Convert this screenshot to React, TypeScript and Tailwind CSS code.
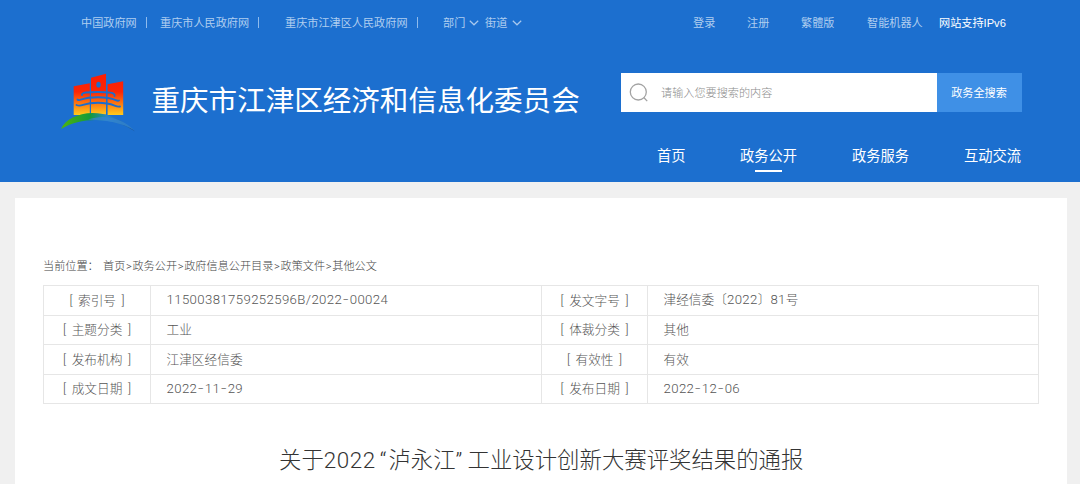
import { Fragment, type ReactNode } from "react";

const CJK = "font-['Noto_Sans_CJK_SC',sans-serif]";
const MIXED = "font-['Roboto','Noto_Sans_CJK_SC',sans-serif]";

function Logo() {
  return (
    <svg width="76" height="60" viewBox="0 0 76 60" className="block">
      <defs>
        <linearGradient id="tower" gradientUnits="userSpaceOnUse" x1="0" y1="0" x2="0" y2="44">
          <stop offset="0" stopColor="#fb1c05" />
          <stop offset="0.45" stopColor="#fb2606" />
          <stop offset="0.72" stopColor="#fd7a10" />
          <stop offset="1" stopColor="#ffd21e" />
        </linearGradient>
        <linearGradient id="hill" x1="0" x2="1" y1="0" y2="0">
          <stop offset="0" stopColor="#4fb40c" />
          <stop offset="0.4" stopColor="#149a3c" />
          <stop offset="0.62" stopColor="#2a86c8" />
          <stop offset="1" stopColor="#1a5496" />
        </linearGradient>
      </defs>
      <path d="M13.700 14.300 29.800 11.300V43H13.700ZM31 5.700 46 1.700v40.800H31ZM47.600 12.300 63.200 9.200V43H47.600Z" fill="url(#tower)" />
      <ellipse cx="38.500" cy="12.700" rx="2.200" ry="2.900" fill="#1d6fcc" />
      <g fill="none" stroke="#1c6dcc" strokeWidth="1.900" strokeLinecap="round">
        <path d="M22 23C21 20.500 28 20 38 20S56 20.500 54.500 24" />
        <path d="M17.500 27.500C20 30 20 25.300 38 25.300S56 30 59 28.500" />
        <path d="M16.500 33C22 35.500 22 30.800 38 30.800S55 35.500 60 34.500" />
      </g>
      <path d="M1 57C9 40 45 31 75 59.500 55 45 22 44 1 57Z" fill="url(#hill)" />
      <path d="M28 47.500C43 42 61 45 74 58 61 50.500 48 48.500 28 47.500Z" fill="#3384cf" opacity=".8" />
    </svg>
  );
}

function Chevron() {
  return (
    <svg width="10" height="6" viewBox="0 0 10 6" fill="none" className="block" stroke="#a9c9ee" strokeWidth="1.200">
      <path d="M.8.8 5 4.800 9.200.8" />
    </svg>
  );
}

function Bar({ className }: { className: string }) {
  return <span className={`h-[11px] w-px bg-[#8fbbed] ${className}`} />;
}

function Header() {
  return (
    <header className="h-[182px] bg-[#1c6fcf] text-white">
      <div className="flex h-[45px] items-center whitespace-nowrap pl-[81px] text-[11.15px] text-[#b0cef0]">
        <span className="w-[65px]">中国政府网</span>
        <Bar className="mr-[13px]" />
        <span className="w-[98px]">重庆市人民政府网</span>
        <Bar className="mr-[26px]" />
        <span className="w-[132px]">重庆市江津区人民政府网</span>
        <Bar className="mr-[25px]" />
        <span className="w-[26px]">部门</span>
        <Chevron />
        <span className="ml-[6px] w-[27px]">街道</span>
        <Chevron />
        <span className="ml-[171px] w-[54px]">登录</span>
        <span className="w-[54px]">注册</span>
        <span className="w-[66px]">繁體版</span>
        <span className="w-[72px]">智能机器人</span>
        <span className="text-white">
          网站支持<span className="font-['Liberation_Sans',sans-serif]">IPv6</span>
        </span>
      </div>
      <div className="flex h-[88px] pl-[60px]">
        <div className="w-[91.500px] pt-[27px]">
          <Logo />
        </div>
        <h1 className="w-[469.500px] whitespace-nowrap pt-[33px] text-[28.55px] leading-[42px]">
          重庆市江津区经济和信息化委员会
        </h1>
        <div className="mt-[28px] flex h-[39px] w-[401px]">
          <div className="flex w-[316px] items-center bg-white pl-[8px]">
            <svg width="20" height="20" viewBox="0 0 20 20" fill="none" stroke="#a3a3a3" strokeWidth="1.300">
              <circle cx="9.300" cy="9" r="8" />
              <path d="m14.800 14.500 3.400 3.600" />
            </svg>
            <span className="ml-[12px] text-[11.15px] font-light text-[#8c8c8c]">请输入您要搜索的内容</span>
          </div>
          <div className="flex flex-1 items-center justify-center bg-[#3f90e6] pr-[1px] text-[11.15px]">政务全搜索</div>
        </div>
      </div>
      <nav className="flex items-start whitespace-nowrap pl-[657px] pt-[11px] text-[14.25px] leading-[22px]">
        <span className="w-[83px]">首页</span>
        <span className="w-[112px]">
          政务公开
          <span className="ml-[15px] mt-[4px] block h-[1.500px] w-[27px] bg-white" />
        </span>
        <span className="w-[112px]">政务服务</span>
        <span>互动交流</span>
      </nav>
    </header>
  );
}

const rows = [
  ["索引号", "11500381759252596B/2022-00024", "发文字号", "津经信委〔2022〕81号"],
  ["主题分类", "工业", "体裁分类", "其他"],
  ["发布机构", "江津区经信委", "有效性", "有效"],
  ["成文日期", "2022-11-29", "发布日期", "2022-12-06"],
];

function Label({ children }: { children: ReactNode }) {
  return (
    <div className="flex items-center justify-center gap-[5.500px] border-r border-[#e6e6e6]">
      <span>[</span>
      <span>{children}</span>
      <span>]</span>
    </div>
  );
}

/* Digits are spaced a little wider than Chinese text, and hyphens take a full digit's width. */
function Value({ text }: { text: string }) {
  return (
    <span>
      {text.split(/([0-9A-Z/]+|-)/).map((part, i) => {
        if (part === "-")
          return (
            <span key={i} className="inline-block w-[7.500px] origin-center scale-x-150 text-center">
              -
            </span>
          );
        if (/^[0-9A-Z/]/.test(part))
          return (
            <span key={i} className="text-[13.2px] tracking-[0.38px]">
              {part}
            </span>
          );
        return <Fragment key={i}>{part}</Fragment>;
      })}
    </span>
  );
}

export default function App() {
  return (
    <div className={`h-[484px] w-[1080px] overflow-hidden bg-[#f0f0f0] ${CJK}`}>
      <Header />
      <main className="ml-[15px] mt-[16px] h-[286px] w-[1052px] bg-white pl-[28px] pt-[58px]">
        <div className={`flex h-[22px] items-center whitespace-nowrap text-[11.15px] font-light text-[#444] ${MIXED}`}>
          <span className="w-[60px]">当前位置：</span>
          <span>
            首页
            {["政务公开", "政府信息公开目录", "政策文件", "其他公文"].map((name) => (
              <Fragment key={name}>
                <span className="inline-block w-[7.200px] text-center">&gt;</span>
                {name}
              </Fragment>
            ))}
          </span>
        </div>
        <div className={`mt-[7px] w-[996px] border-l border-t border-[#e6e6e6] text-[12.7px] font-light text-[#555] ${MIXED}`}>
          {rows.map((row) => (
            <div
              key={row[0]}
              className="grid h-[29.550px] grid-cols-[107px_391px_106px_391px] whitespace-nowrap border-b border-[#e6e6e6]"
            >
              <Label>{row[0]}</Label>
              <div className="flex items-center border-r border-[#e6e6e6] pl-[15.500px]">
                <Value text={row[1]} />
              </div>
              <Label>{row[2]}</Label>
              <div className="flex items-center border-r border-[#e6e6e6] pl-[15.500px]">
                <Value text={row[3]} />
              </div>
            </div>
          ))}
        </div>
        <h2 className={`mt-[40px] whitespace-nowrap pl-[236px] text-[22.4px] font-light leading-[32px] text-[#333] ${MIXED}`}>
          关于<span className="tracking-[0.6px]">2022</span>
          <span className="inline-block w-[12.500px] pr-[2px] text-right">“</span>泸永江
          <span className="inline-block w-[12px]">”</span>工业设计创新大赛评奖结果的通报
        </h2>
      </main>
    </div>
  );
}
